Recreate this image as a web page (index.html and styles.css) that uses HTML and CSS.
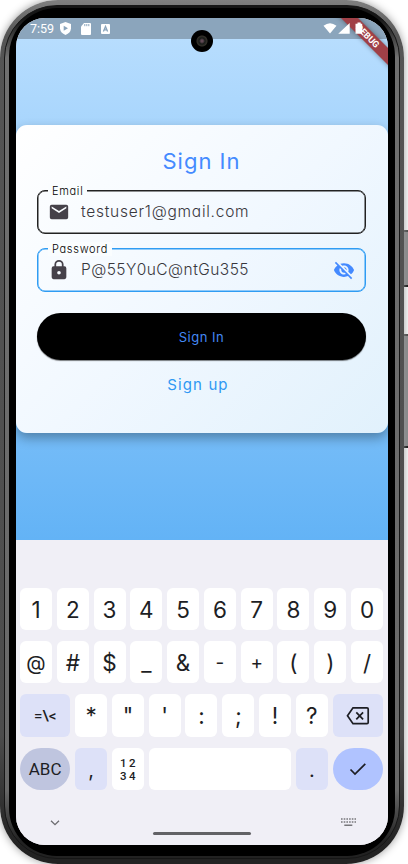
FILE: index.html
```html
<!DOCTYPE html>
<html lang="en">
<head>
<meta charset="utf-8">
<title>Sign In</title>
<link rel="stylesheet" href="styles.css">
</head>
<body>
<div class="side-button power"></div>
<div class="side-button volume"></div>
<div class="phone">
<div class="rim">
<div class="bezel">
<div class="screen">
  <header class="status">
    <span class="time">7:59</span>
    <svg class="shield" width="11" height="13" viewBox="0 0 11 13"><path fill="#fff" d="M5.500 0L11 2v4.500Q10.500 11 5.500 13Q.5 11 0 6.500V2z"/><path fill="#8ba5bc" d="M3.700 3.800L8 6.300L3.700 8.800z"/></svg>
    <svg class="sd" width="10" height="12" viewBox="0 0 10 12"><path fill="#fff" d="M3 0h6q1 0 1 1v10q0 1-1 1H1q-1 0-1-1V3.500z"/><path stroke="#8ba5bc" d="M3.800 1v2.200M5.800 1v2.200M7.800 1v2.200"/></svg>
    <svg class="abox" width="9" height="10" viewBox="0 0 9 10"><rect width="9" height="10" rx="1" fill="#fff"/><path fill="none" stroke="#8ba5bc" stroke-width="1.300" d="M2.400 7.500L4.500 2.500L6.600 7.500M3 5.900h3"/></svg>
  </header>
  <main class="app">
    <form class="card">
      <h1>Sign In</h1>
      <div class="field">
        <span class="label">Email</span>
        <svg class="lead" width="22" height="22" viewBox="0 0 24 24"><path fill="#454149" d="M20 4H4a2 2 0 0 0-2 2v12a2 2 0 0 0 2 2h16a2 2 0 0 0 2-2V6a2 2 0 0 0-2-2zm0 4-8 5-8-5V6l8 5 8-5z"/></svg>
        <span class="value email">testuser1@gmail.com</span>
      </div>
      <div class="field active">
        <span class="label">Password</span>
        <svg class="lead" width="22" height="22" viewBox="0 0 24 24"><path fill="#454149" d="M18 8h-1V6A5 5 0 0 0 7 6v2H6a2 2 0 0 0-2 2v10a2 2 0 0 0 2 2h12a2 2 0 0 0 2-2V10a2 2 0 0 0-2-2zm-6 9a2 2 0 1 1 0-4 2 2 0 0 1 0 4zm3.100-9H8.900V6a3.100 3.100 0 0 1 6.200 0z"/></svg>
        <span class="value pass">P@55Y0uC@ntGu355</span>
        <svg class="eye" width="22" height="22" viewBox="0 0 24 24"><path fill="#448aff" d="M12 7c2.760 0 5 2.240 5 5 0 .65-.13 1.260-.36 1.830l2.920 2.920c1.510-1.260 2.700-2.890 3.430-4.750-1.730-4.390-6-7.500-11-7.500-1.400 0-2.740.25-3.980.7l2.160 2.160C10.740 7.130 11.350 7 12 7zM2 4.270l2.280 2.280.46.46C3.080 8.300 1.780 10.020 1 12c1.730 4.390 6 7.500 11 7.500 1.550 0 3.030-.3 4.380-.84l.42.42L19.730 22 21 20.730 3.270 3 2 4.270zM7.530 9.800l1.550 1.550c-.05.21-.08.43-.08.65 0 1.660 1.340 3 3 3 .22 0 .44-.03.65-.08l1.550 1.550c-.67.33-1.410.53-2.200.53-2.760 0-5-2.240-5-5 0-.79.2-1.530.53-2.200zm4.310-.78 3.150 3.150.02-.16c0-1.660-1.340-3-3-3l-.17.010z"/></svg>
      </div>
      <button class="primary" type="button">Sign In</button>
      <a class="signup">Sign up</a>
    </form>
  </main>
  <section class="keyboard">
    <div class="keys">
      <div class="row"><b>1</b><b>2</b><b>3</b><b>4</b><b>5</b><b>6</b><b>7</b><b>8</b><b>9</b><b>0</b></div>
      <div class="row"><b class="at">@</b><b>#</b><b>$</b><b>_</b><b>&amp;</b><b class="small">-</b><b class="small">+</b><b>(</b><b>)</b><b>/</b></div>
      <div class="row"><b class="wide tint sym">=\&lt;</b><b>*</b><b>"</b><b>'</b><b>:</b><b>;</b><b>!</b><b>?</b><b class="wide tint"><svg width="24" height="20" viewBox="0 0 24 20"><path fill="none" stroke="#1d1e24" stroke-width="1.700" d="M7 1.800h14q1.200 0 1.200 1.200v13.500q0 1.200-1.200 1.200H7L1.500 9.800zM10.300 6.300l6.800 7M17.100 6.300l-6.800 7"/></svg></b></div>
      <div class="row"><b class="wide round abc">ABC</b><b class="tint comma">,</b><b class="numpad"><span>12</span><span>34</span></b><b class="space"></b><b class="tint dot">.</b><b class="wide round enter"><svg width="18" height="14" viewBox="0 0 18 14"><path fill="none" stroke="#1d1e24" stroke-width="1.700" d="M1.500 7.500L6 12L16.300 1.800"/></svg></b></div>
    </div>
    <footer class="nav">
      <svg width="10" height="6" viewBox="0 0 10 6"><path fill="none" stroke="#6c6c70" stroke-width="1.300" d="M1 .8L5 4.700L9 .8"/></svg>
      <span class="handle"></span>
      <svg width="15" height="9" viewBox="0 0 15 9"><path fill="none" stroke="#77777b" stroke-width="1.500" stroke-dasharray="1.600 1.100" d="M0 1h15M0 4h15"/><path stroke="#77777b" stroke-width="1.500" d="M3.300 7.300h8"/></svg>
    </footer>
  </section>
  <div class="debug">DEBUG</div>
  <svg class="signals" width="42" height="14" viewBox="0 0 42 14"><path fill="#fff" d="M.5 3.800Q7-1.500 13.500 3.800L7 11.500zM26.700 1v10.700H15.200zM34.500.5h3.200v1.300h1.500v10H32.500v-10h2z"/></svg>
</div>
</div>
</div>
<div class="camera"></div>
</div>
</body>
</html>
```
FILE: styles.css
```css
* { box-sizing: border-box; }
body { margin: 0; width: 408px; height: 864px; overflow: hidden; position: relative; background: #fff; }
.side-button { position: absolute; left: 401px; width: 9px; background: #858688; border: 2px solid #3d3d3d; border-bottom-color: #000; }
.power { top: 230px; height: 57px; }
.volume { top: 334px; height: 114px; }
.phone { position: relative; width: 404px; height: 864px; padding: 5px 4px; border-radius: 58px; background: linear-gradient(#808080, #555 4%, #4c4c4c 85%, #222 98%); box-shadow: 0 0 9px #999; }
.rim { height: 854px; padding: 2px 4px; border-radius: 53px; background: linear-gradient(#161616, #161616 1.500%, #707070 6%, #686868 92%, #222 98%); border: 1px solid #161616; }
.bezel { height: 848px; padding: 10px 7px 11px; border-radius: 48px; background: #000; }
.screen { position: relative; display: flex; flex-direction: column; width: 372px; height: 827px; overflow: hidden; border-radius: 29px; background: #f0eff6; }
.status { display: flex; align-items: center; height: 21px; flex: none; padding: 0 0 0 14px; background: #8ba5bc; color: #fff; font: 12.500px Roboto, sans-serif; }
.time { width: 30px; }
.shield { margin-right: 10px; }
.sd { margin-right: 10px; }
.signals { position: absolute; z-index: 3; top: 4px; left: 307px; }
.app { height: 501px; flex: none; padding-top: 86px; background: linear-gradient(#b7ddfe, #63b3f6); }
.card { display: flex; flex-direction: column; height: 308px; padding: 21px 22px 0 21px; border-radius: 11px; background: linear-gradient(135deg, #fff, #f1f8ff 50%, #e1f1fc); box-shadow: 0 5px 12px rgba(0,0,0,.32); font-family: Inter, sans-serif; font-feature-settings: "cv11"; color: #38373d; }
h1 { margin: 0 0 15px; height: 29px; line-height: 30px; font-size: 22px; font-weight: 400; letter-spacing: 1px; text-align: center; color: #448aff; }
.field { position: relative; display: flex; align-items: center; height: 44px; margin-bottom: 14px; padding: 0 10px; border: 1px solid #222; box-shadow: inset 0 0 0 .5px #222; border-radius: 8px; }
.active { border-color: #2f9cf3; box-shadow: inset 0 0 0 .5px #2f9cf3; }
.label { position: absolute; top: -7px; left: 10px; padding: 0 4px; background: #fafdff; font-size: 11px; line-height: 14px; letter-spacing: .7px; font-weight: 300; color: #000; }
.value { margin-left: 11px; font-size: 15.500px; font-weight: 300; white-space: nowrap; position: relative; top: -1px; }
.email { letter-spacing: .75px; }
.pass { letter-spacing: .45px; }
.eye { margin-left: auto; }
.primary { height: 47px; margin: 7px 0 14px; border: 0; border-radius: 24px; background: #000; color: #4488f4; font: 13px Inter, sans-serif; letter-spacing: .5px; box-shadow: 0 1px 1px rgba(0,0,0,.5); }
.signup { align-self: center; line-height: 22px; font-size: 15px; letter-spacing: 1.100px; color: #2f98f3; margin-left: -7px; }
.keyboard { height: 305px; flex: none; padding: 47.500px 5px 0 4px; background: #f0eff6; }
.keys { display: flex; flex-direction: column; gap: 11px; }
.row { display: flex; gap: 4.800px; height: 42.400px; }
b { flex: 1 1 0; display: flex; align-items: center; justify-content: center; border-radius: 6px; background: #fff; color: #1d1e24; font: 400 22.500px Inter, sans-serif; padding-top: 1px; }
.at { font-size: 20px; }
.small { font-size: 19px; }
.dot, .comma { font-size: 20px; padding-top: 3px; }
.wide { flex: 0 0 50.300px; }
.tint { background: #dde1f8; }
.sym { font: 500 15px Roboto, sans-serif; }
.round { border-radius: 22px; }
.abc { background: #bfc5df; font: 17px Roboto, sans-serif; }
.row .comma, .row .numpad { flex: 0 0 32.100px; }
.row .space { flex: 1 1 auto; }
.row .dot { flex: 0 0 32.100px; }
.numpad { flex-direction: column; gap: 1px; font: 500 11.500px/12px Roboto, sans-serif; letter-spacing: 2.500px; padding-left: 2px; }
.numpad span { height: 12px; overflow: hidden; }
.enter { background: #b0c3ff; }
.nav { display: flex; align-items: center; justify-content: space-between; height: 31px; margin-top: 17px; padding: 0 32px 0 30px; }
.nav svg { flex: none; }
.handle { width: 98px; height: 3px; margin: 22px 0 0 2px; border-radius: 2px; background: #626266; }
.nav svg:last-child { margin-right: -5px; }
.debug { position: absolute; z-index: 1; top: 9px; right: -34px; width: 115px; height: 12px; padding-left: 9px; transform: rotate(45deg); background: #a04047; color: #fff; text-align: center; font: bold 9px/12px Roboto, sans-serif; box-shadow: 0 0 5px rgba(0,0,0,.4); }
.camera { position: absolute; top: 30px; left: 191px; width: 22px; height: 22px; border-radius: 50%; background: radial-gradient(circle, #624955 0 1px, #171b18 3px, #34302a 5px, #000 6px); }
```
